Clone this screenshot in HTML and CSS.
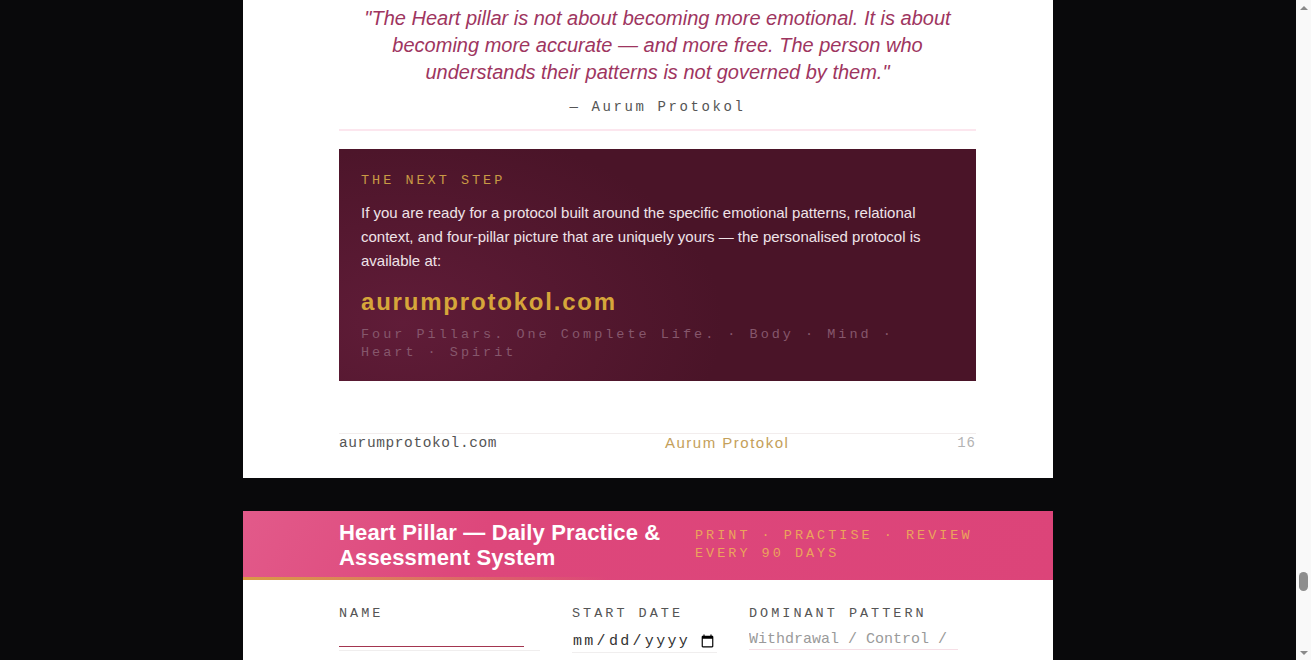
FILE: index.html
```html
<!DOCTYPE html>
<html lang="en">
<head>
<meta charset="utf-8">
<title>Aurum Protokol — Heart Pillar</title>
<link rel="stylesheet" href="styles.css">
</head>
<body>
<div class="stack">
  <section class="page page-end">
    <blockquote class="quote">
      <p class="quote-text">"The Heart pillar is not about becoming more emotional. It is about becoming more accurate — and more free. The person who understands their patterns is not governed by them."</p>
      <p class="quote-by">— Aurum Protokol</p>
    </blockquote>
    <div class="cta">
      <p class="cta-label">THE NEXT STEP</p>
      <p class="cta-text">If you are ready for a protocol built around the specific emotional patterns, relational context, and four-pillar picture that are uniquely yours — the personalised protocol is available at:</p>
      <p class="cta-url">aurumprotokol.com</p>
      <p class="cta-tag">Four Pillars. One Complete Life. · Body · Mind · Heart · Spirit</p>
    </div>
    <footer class="page-foot">
      <span class="foot-site">aurumprotokol.com</span>
      <span class="foot-brand">Aurum Protokol</span>
      <span class="foot-num">16</span>
    </footer>
  </section>

  <section class="page page-form">
    <header class="band">
      <h1 class="band-title">Heart Pillar — Daily Practice &amp; Assessment System</h1>
      <p class="band-note">PRINT · PRACTISE · REVIEW EVERY 90 DAYS</p>
    </header>
    <div class="fields">
      <label class="field">
        <span class="field-label">NAME</span>
        <span class="field-line name-line"><input class="field-input name-input" type="text"></span>
      </label>
      <label class="field">
        <span class="field-label">START DATE</span>
        <span class="field-line"><input class="field-input date-input" type="date"></span>
      </label>
      <label class="field">
        <span class="field-label">DOMINANT PATTERN</span>
        <span class="field-line pink"><input class="field-input" type="text" placeholder="Withdrawal / Control /"></span>
      </label>
    </div>
  </section>
</div>
<div class="scrollbar" aria-hidden="true">
  <span class="sb-arrow sb-up"></span>
  <span class="sb-track"><span class="sb-thumb"></span></span>
  <span class="sb-arrow sb-down"></span>
</div>
</body>
</html>
```
FILE: styles.css
```css
html, body {
  margin: 0;
  padding: 0;
  background: #09090b;
}
body {
  font-family: "Liberation Sans", Arial, sans-serif;
  overflow: hidden;
}
p { margin: 0; }

.stack {
  display: flex;
  flex-direction: column;
  align-items: center;
  gap: 33px;
  padding-right: 15px;
}

.page {
  width: 810px;
  box-sizing: border-box;
  background: #ffffff;
}

.page-end {
  padding: 5px 77px 26px 96px;
}

.quote {
  margin: 0;
  text-align: center;
  padding-bottom: 12px;
  border-bottom: 2px solid #fce6ee;
}
.quote-text {
  font-style: italic;
  font-size: 20px;
  line-height: 27px;
  color: #9e3560;
  padding: 0 18px;
}
.quote-by {
  margin-top: 11px;
  font-family: "Liberation Mono", monospace;
  font-size: 14px;
  line-height: 20px;
  letter-spacing: 2.6px;
  color: #555555;
}

.cta {
  margin-top: 18px;
  padding: 23px 22px 19px;
  background:
    radial-gradient(ellipse 320px 200px at 10% 75%, #601c38 0%, rgba(96,28,56,0) 100%),
    #4a1428;
}
.cta-label {
  font-family: "Liberation Mono", monospace;
  font-size: 13.5px;
  line-height: 18px;
  letter-spacing: 3px;
  color: #c99a45;
}
.cta-text {
  margin-top: 11px;
  font-size: 15px;
  line-height: 24px;
  color: #efe3e8;
}
.cta-url {
  margin-top: 13px;
  font-size: 24px;
  line-height: 32px;
  font-weight: 700;
  letter-spacing: 1.8px;
  color: #d6a63a;
}
.cta-tag {
  margin-top: 8px;
  max-width: 560px;
  font-family: "Liberation Mono", monospace;
  font-size: 13.5px;
  line-height: 18px;
  letter-spacing: 3px;
  color: #86576c;
}

.page-foot {
  margin-top: 52px;
  border-top: 1px solid #f2eded;
  display: flex;
  justify-content: space-between;
  align-items: center;
  line-height: 18px;
}
.foot-site {
  font-family: "Liberation Mono", monospace;
  font-size: 14.5px;
  letter-spacing: 0.6px;
  color: #555555;
}
.foot-brand {
  font-size: 15px;
  letter-spacing: 1.5px;
  color: #c4a05a;
}
.foot-num {
  font-family: "Liberation Mono", monospace;
  font-size: 14px;
  letter-spacing: 1px;
  color: #b3b3b3;
}

.page-form {
  padding-bottom: 60px;
}
.band {
  display: flex;
  align-items: center;
  gap: 26px;
  padding: 9px 77px 7px 96px;
  background: linear-gradient(120deg, #e25a8a 0%, #dd477b 30%, #dc4479 100%);
  border-bottom: 3px solid transparent;
  border-image: linear-gradient(90deg, #d99a45 0%, rgba(220,68,121,0) 45%) 1;
}
.band-title {
  margin: 0;
  flex: 0 0 330px;
  font-size: 22px;
  line-height: 25px;
  font-weight: 700;
  color: #ffffff;
  letter-spacing: 0.15px;
}
.band-note {
  flex: 1;
  font-family: "Liberation Mono", monospace;
  font-size: 13.5px;
  line-height: 18px;
  letter-spacing: 3px;
  color: #eba35c;
}

.fields {
  display: grid;
  grid-template-columns: 201px 145px 209px;
  column-gap: 32px;
  padding: 25px 77px 0 96px;
}
.field {
  display: flex;
  flex-direction: column;
  gap: 7px;
}
.field-label {
  font-family: "Liberation Mono", monospace;
  font-size: 13.5px;
  line-height: 18px;
  letter-spacing: 3px;
  color: #555555;
}
.field-line {
  display: block;
  border-bottom: 1px solid #f0eeee;
}
.field-line.pink {
  border-bottom-color: #f6dfe6;
}
.field-line.name-line {
  padding-bottom: 3px;
}
.field-input {
  display: block;
  width: 100%;
  height: 19px;
  box-sizing: border-box;
  border: 0;
  background: transparent;
  padding: 0;
  font-family: "Liberation Mono", monospace;
  font-size: 15px;
  line-height: 19px;
  color: #333333;
  outline: none;
}
.field-input::placeholder {
  color: #9a9a9a;
}
.name-input {
  width: 185px;
  height: 17px;
  border-bottom: 1px solid #a3354f;
}
.date-input {
  height: 22px;
  letter-spacing: 2.3px;
  color: #333333;
}

.scrollbar {
  position: fixed;
  top: 0;
  right: 0;
  width: 15px;
  height: 100vh;
  background: #f9f9f9;
  display: flex;
  flex-direction: column;
}
.sb-track {
  flex: 1;
  position: relative;
}
.sb-thumb {
  position: absolute;
  left: 3px;
  top: 557px;
  width: 9px;
  height: 19px;
  border-radius: 5px;
  background: #8e8e8e;
}
.sb-arrow {
  height: 15px;
  display: flex;
  align-items: center;
  justify-content: center;
}
.sb-up::before,
.sb-down::before {
  content: "";
  width: 0;
  height: 0;
  border-left: 4px solid transparent;
  border-right: 4px solid transparent;
}
.sb-up::before {
  border-bottom: 4px solid #8a8a8a;
}
.sb-down::before {
  border-top: 4px solid #8a8a8a;
}
```
